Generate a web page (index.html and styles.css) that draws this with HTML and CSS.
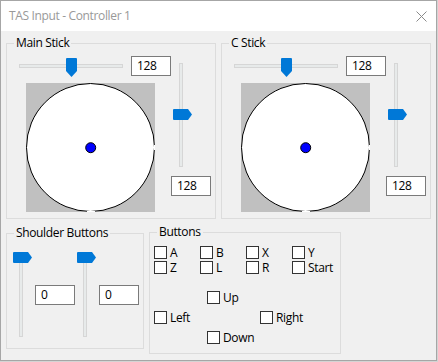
FILE: index.html
```html
<!DOCTYPE html>
<html>
<head>
<meta charset="utf-8">
<link rel="stylesheet" href="styles.css">
</head>
<body>
<div class="window">
  <div class="titlebar">
    <span class="title">TAS Input - Controller 1</span>
    <svg class="close" width="11" height="11" viewBox="0 0 11 11"><path d="M0.5 0.5L10.5 10.5M10.5 0.5L0.5 10.5" stroke="#8a8a8a" stroke-width="1" fill="none"/></svg>
  </div>
  <div class="content">
    <div class="row row-top">
      <section class="group stick">
        <div class="group-title">Main Stick</div>
        <div class="stick-body">
          <div class="stick-left">
            <div class="hrow">
              <div class="hslider">
                <div class="htrack"></div>
                <svg class="thumb-h" viewBox="0 0 11 19"><path d="M0 1Q0 0 1 0H10Q11 0 11 1V13L5.5 19L0 13Z" fill="#0078d7"/></svg>
              </div>
              <div class="textbox">128</div>
            </div>
            <svg class="pad" viewBox="0 0 129 129"><rect width="129" height="129" fill="#c0c0c0"/><circle cx="64.5" cy="64.5" r="64" fill="#fff" stroke="#000" stroke-width="1"/><rect x="128" y="62" width="1" height="5" fill="#fff"/><rect x="61" y="128" width="8" height="1" fill="#fff"/><circle cx="64.7" cy="64.7" r="5" fill="#0000ff" stroke="#000" stroke-width="1"/></svg>
          </div>
          <div class="stick-right">
            <div class="vslider">
              <div class="vtrack"></div>
              <svg class="thumb-v mid" viewBox="0 0 19 11"><path d="M1 0H15L19 5.5L15 11H1Q0 11 0 10V1Q0 0 1 0Z" fill="#0078d7"/></svg>
            </div>
            <div class="textbox">128</div>
          </div>
        </div>
      </section>
      <section class="group stick">
        <div class="group-title">C Stick</div>
        <div class="stick-body">
          <div class="stick-left">
            <div class="hrow">
              <div class="hslider">
                <div class="htrack"></div>
                <svg class="thumb-h" viewBox="0 0 11 19"><path d="M0 1Q0 0 1 0H10Q11 0 11 1V13L5.5 19L0 13Z" fill="#0078d7"/></svg>
              </div>
              <div class="textbox">128</div>
            </div>
            <svg class="pad" viewBox="0 0 129 129"><rect width="129" height="129" fill="#c0c0c0"/><circle cx="64.5" cy="64.5" r="64" fill="#fff" stroke="#000" stroke-width="1"/><rect x="128" y="62" width="1" height="5" fill="#fff"/><rect x="61" y="128" width="8" height="1" fill="#fff"/><circle cx="64.7" cy="64.7" r="5" fill="#0000ff" stroke="#000" stroke-width="1"/></svg>
          </div>
          <div class="stick-right">
            <div class="vslider">
              <div class="vtrack"></div>
              <svg class="thumb-v mid" viewBox="0 0 19 11"><path d="M1 0H15L19 5.5L15 11H1Q0 11 0 10V1Q0 0 1 0Z" fill="#0078d7"/></svg>
            </div>
            <div class="textbox">128</div>
          </div>
        </div>
      </section>
    </div>
    <div class="row row-bottom">
      <section class="group shoulder">
        <div class="group-title">Shoulder Buttons</div>
        <div class="shoulder-body">
          <div class="vslider tall">
            <div class="vtrack"></div>
            <svg class="thumb-v top" viewBox="0 0 19 11"><path d="M1 0H15L19 5.5L15 11H1Q0 11 0 10V1Q0 0 1 0Z" fill="#0078d7"/></svg>
          </div>
          <div class="textbox small">0</div>
          <div class="vslider tall">
            <div class="vtrack"></div>
            <svg class="thumb-v top" viewBox="0 0 19 11"><path d="M1 0H15L19 5.5L15 11H1Q0 11 0 10V1Q0 0 1 0Z" fill="#0078d7"/></svg>
          </div>
          <div class="textbox small">0</div>
        </div>
      </section>
      <section class="group buttons">
        <div class="group-title">Buttons</div>
        <div class="checks">
          <label class="cb"><span class="box"></span>A</label>
          <label class="cb"><span class="box"></span>B</label>
          <label class="cb"><span class="box"></span>X</label>
          <label class="cb"><span class="box"></span>Y</label>
          <label class="cb"><span class="box"></span>Z</label>
          <label class="cb"><span class="box"></span>L</label>
          <label class="cb"><span class="box"></span>R</label>
          <label class="cb"><span class="box"></span>Start</label>
        </div>
        <div class="dpad">
          <label class="cb up"><span class="box"></span>Up</label>
          <label class="cb left"><span class="box"></span>Left</label>
          <label class="cb right"><span class="box"></span>Right</label>
          <label class="cb down"><span class="box"></span>Down</label>
        </div>
      </section>
    </div>
  </div>
</div>
</body>
</html>
```
FILE: styles.css
```css
* { box-sizing: border-box; }
html, body { margin: 0; padding: 0; }
body {
  width: 438px;
  height: 362px;
  background: #d4d4d4;
  font-family: "Segoe UI", "Open Sans", sans-serif;
  font-size: 12px;
  letter-spacing: -0.35px;
  color: #000;
  overflow: hidden;
}
.window {
  width: 437px;
  height: 361px;
  border: 1px solid #a6a6a6;
  background: #f0f0f0;
  display: flex;
  flex-direction: column;
}
.titlebar {
  height: 30px;
  flex: none;
  background: #fff;
  display: flex;
  align-items: center;
  justify-content: space-between;
  padding: 0 9px 0 8px;
  color: #999;
  line-height: 16px;
}
.close { display: block; }
.content {
  padding: 12px 5px 0 5px;
  display: flex;
  flex-direction: column;
}
.row { display: flex; gap: 5px; }
.row-bottom { margin-top: 13px; align-items: flex-start; }
.group { border: 1px solid #dcdcdc; }
.group-title {
  margin: -9px 0 0 7px;
  padding: 0 2px;
  width: max-content;
  background: #f0f0f0;
  line-height: 16px;
}
.stick { width: 210px; height: 176px; }
.stick-body { display: flex; }
.stick-left { width: 164px; padding-top: 5px; }
.hrow { display: flex; height: 20px; padding-left: 12px; }
.hslider { position: relative; width: 104px; height: 20px; }
.htrack {
  position: absolute;
  left: 0; right: 0; top: 8px;
  height: 4px;
  background: #e7eaea;
  border: 1px solid #d6d6d6;
}
.thumb-h { position: absolute; left: 47px; top: 2px; width: 11px; height: 19px; }
.textbox {
  width: 40px;
  height: 20px;
  border: 1px solid #7a7a7a;
  background: #fff;
  padding-left: 5px;
  line-height: 18px;
}
.hrow .textbox { margin-left: 8px; }
.pad { display: block; width: 129px; height: 129px; margin: 7px 0 0 19px; }
.stick-right { padding-top: 12px; display: flex; flex-direction: column; }
.vslider { position: relative; width: 19px; height: 104px; margin-left: 2px; }
.vtrack {
  position: absolute;
  left: 6px; top: 0; bottom: 0;
  width: 4px;
  background: #e7eaea;
  border: 1px solid #d6d6d6;
}
.thumb-v { position: absolute; left: 0; width: 19px; height: 11px; }
.thumb-v.mid { top: 46px; }
.thumb-v.top { top: 0; }
.stick-right .textbox { margin-top: 9px; }

.shoulder { width: 138px; height: 116px; margin-top: 1px; }
.shoulder-body { display: flex; align-items: flex-start; padding: 11px 0 0 6px; }
.vslider.tall { height: 85px; margin-left: 0; }
.textbox.small { margin: 33px 0 0 3px; padding-left: 5px; }
.textbox.small + .vslider.tall { margin-left: 2px; }

.buttons { width: 192px; height: 122px; }
.checks {
  display: grid;
  grid-template-columns: repeat(4, 46px);
  grid-auto-rows: 15px;
  margin: 6px 0 0 4px;
}
.dpad {
  display: grid;
  grid-template-columns: repeat(3, 53px);
  grid-template-rows: repeat(3, 20px);
  margin: 15px 0 0 4px;
}
.cb { display: flex; align-items: flex-start; gap: 3px; line-height: 13px; white-space: nowrap; }
.box { width: 13px; height: 13px; border: 1px solid #333; background: #fff; flex: none; }
.up { grid-column: 2; grid-row: 1; }
.left { grid-column: 1; grid-row: 2; }
.right { grid-column: 3; grid-row: 2; }
.down { grid-column: 2; grid-row: 3; }
```
